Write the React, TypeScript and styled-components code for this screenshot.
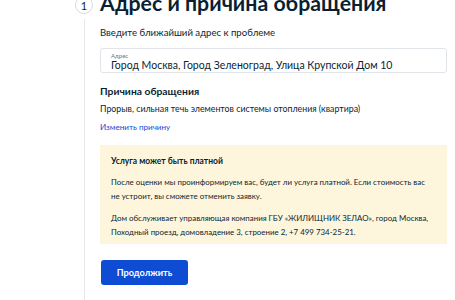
import React from "react";
import styled, { createGlobalStyle } from "styled-components";

const GlobalStyle = createGlobalStyle`
  html, body {
    margin: 0;
    padding: 0;
    background: #fff;
  }
  body {
    font-family: Lato, "Noto Sans", sans-serif;
    color: #0b1f33;
    overflow: hidden;
  }
`;

const Page = styled.div`
  display: grid;
  grid-template-columns: 18px 347px;
  column-gap: 7px;
  margin-top: -9px;
  padding-left: 75px;
`;

const StepCircle = styled.div`
  width: 16px;
  height: 16px;
  margin-top: 5px;
  border: 1px solid #d6dbe0;
  border-radius: 50%;
  display: flex;
  align-items: center;
  justify-content: center;
  font-size: 11px;
  align-self: start;
  box-sizing: content-box;
`;

const Title = styled.h1`
  margin: 0;
  font-size: 21.3px;
  line-height: 24px;
  font-weight: 700;
  white-space: nowrap;
`;

const Rail = styled.div`
  display: flex;
  justify-content: center;
  padding-top: 4px;
  &::before {
    content: "";
    width: 1px;
    background: #e6e9ec;
  }
`;

const Content = styled.div`
  display: flex;
  flex-direction: column;
  padding-bottom: 20px;
`;

const Hint = styled.p`
  margin: 10px 0 7px;
  font-size: 9.6px;
  line-height: 16px;
`;

const Field = styled.div`
  height: 25px;
  box-sizing: border-box;
  border: 1px solid #e1e5e9;
  border-radius: 3px;
  padding: 3px 10px 0;
  display: flex;
  flex-direction: column;
`;

const FieldLabel = styled.span`
  font-size: 6px;
  line-height: 7px;
  color: #66727f;
`;

const FieldValue = styled.span`
  font-size: 10.5px;
  line-height: 12px;
`;

const SubTitle = styled.h2`
  margin: 10px 0 0;
  font-size: 10.3px;
  line-height: 16px;
  font-weight: 700;
`;

const Text = styled.p`
  margin: 2px 0 0;
  font-size: 8.8px;
  line-height: 16px;
`;

const Link = styled.a`
  margin-top: 2px;
  font-size: 8.1px;
  line-height: 16px;
  color: #0d4cd3;
  text-decoration: none;
`;

const Notice = styled.div`
  margin-top: 10px;
  background: #fdf6dd;
  padding: 9px 14px 5px 11px;
  display: flex;
  flex-direction: column;
  gap: 8px;
`;

const NoticeTitle = styled.h3`
  margin: 0 0 -1px;
  font-size: 8.5px;
  line-height: 14px;
  font-weight: 700;
`;

const NoticeText = styled.p`
  margin: 0;
  font-size: 7.9px;
  line-height: 14px;
`;

const Button = styled.button`
  margin-top: 16px;
  align-self: flex-start;
  width: 87px;
  height: 25px;
  margin-left: 1px;
  border: none;
  border-radius: 3px;
  background: #0d4cd3;
  color: #fff;
  font-family: Lato, "Noto Sans", sans-serif;
  font-size: 9.2px;
  font-weight: 700;
`;

export default function App() {
  return (
    <>
      <GlobalStyle />
      <Page>
        <StepCircle>1</StepCircle>
        <Title>Адрес и причина обращения</Title>
        <Rail />
        <Content>
          <Hint>Введите ближайший адрес к проблеме</Hint>
          <Field>
            <FieldLabel>Адрес</FieldLabel>
            <FieldValue>Город Москва, Город Зеленоград, Улица Крупской Дом 10</FieldValue>
          </Field>
          <SubTitle>Причина обращения</SubTitle>
          <Text>Прорыв, сильная течь элементов системы отопления (квартира)</Text>
          <Link href="#">Изменить причину</Link>
          <Notice>
            <NoticeTitle>Услуга может быть платной</NoticeTitle>
            <NoticeText>
              После оценки мы проинформируем вас, будет ли услуга платной. Если стоимость вас не
              устроит, вы сможете отменить заявку.
            </NoticeText>
            <NoticeText>
              Дом обслуживает управляющая компания ГБУ «ЖИЛИЩНИК ЗЕЛАО», город Москва, Походный
              проезд, домовладение 3, строение 2, +7 499 734-25-21.
            </NoticeText>
          </Notice>
          <Button>Продолжить</Button>
        </Content>
      </Page>
    </>
  );
}
